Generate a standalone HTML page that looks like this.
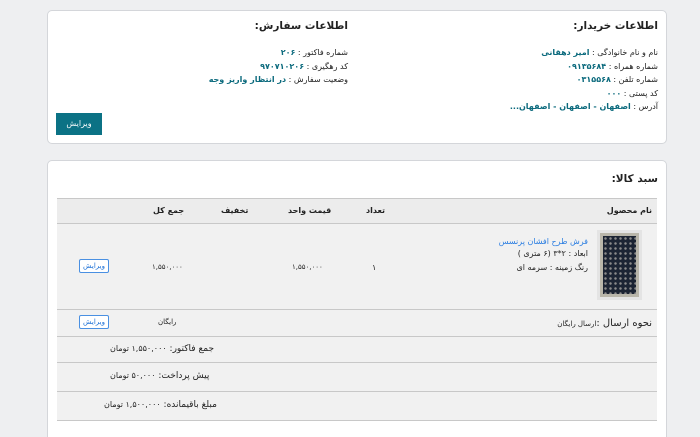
<!DOCTYPE html>
<html dir="rtl"><head><meta charset="utf-8"><style>
*{margin:0;padding:0;box-sizing:border-box}
html,body{width:700px;height:437px;overflow:hidden}
body{background:#eeeff1;font-family:"DejaVu Sans","Liberation Sans",sans-serif;font-size:8px;color:#222;position:relative}
.a{position:absolute;white-space:nowrap}
.card{position:absolute;background:#fff;border:1px solid #d4d6da;border-radius:5px}
.t{color:#0b6a7d;font-weight:bold}
h3{font-size:10.5px;font-weight:bold;position:absolute;white-space:nowrap}
.btn{position:absolute;background:#0b7285;color:#fff;font-size:8px;text-align:center}
.sb{position:absolute;border:1px solid #4a90e2;border-radius:2px;color:#1a6fd6;font-size:7px;text-align:center;background:#fff;width:30px;height:14px;line-height:12px}
.row{position:absolute;left:57px;width:600px;background:#f1f1f1;border-bottom:1px solid #c8c8c8}
</style></head><body>
<div class="card" style="left:47px;top:10px;width:620px;height:134px"></div>
<h3 style="right:42px;top:20px">اطلاعات خریدار:</h3>
<div class="a" style="right:42px;top:46px;line-height:13.5px;text-align:right">نام و نام خانوادگی : <span class="t">امیر دهقانی</span><br>شماره همراه : <span class="t">۰۹۱۳۵۶۸۴</span><br>شماره تلفن : <span class="t">۰۳۱۵۵۶۸</span><br>کد پستی : <span class="t">۰۰۰</span><br>آدرس : <span class="t">اصفهان - اصفهان - اصفهان...</span></div>
<h3 style="right:352px;top:20px">اطلاعات سفارش:</h3>
<div class="a" style="right:352px;top:46px;line-height:13.5px;text-align:right">شماره فاکتور : <span class="t">۲۰۶</span><br>کد رهگیری : <span class="t">۹۷۰۷۱۰۲۰۶</span><br>وضعیت سفارش : <span class="t">در انتظار واریز وجه</span></div>
<div class="btn" style="left:56px;top:113px;width:46px;height:22px;line-height:22px">ویرایش</div>

<div class="card" style="left:47px;top:160px;width:620px;height:290px"></div>
<h3 style="right:42px;top:173px">سبد کالا:</h3>
<div class="a" style="left:57px;top:198px;width:600px;height:223px;border:1px solid #c8c8c8;background:#f1f1f1"></div>
<div class="row" style="top:199px;height:25px;background:#ececec"></div>
<div class="a" style="right:48px;top:206px;font-weight:bold">نام محصول</div>
<div class="a" style="left:366px;top:206px;font-weight:bold">تعداد</div>
<div class="a" style="left:288px;top:206px;font-weight:bold">قیمت واحد</div>
<div class="a" style="left:221px;top:206px;font-weight:bold">تخفیف</div>
<div class="a" style="left:153px;top:206px;font-weight:bold">جمع کل</div>
<div class="row" style="top:224px;height:86px"></div>
<div class="a" style="left:597px;top:230px;width:45px;height:70px;background:#e4e4e4;padding:3px">
<div style="width:100%;height:100%;background:#1c2433;border:3px solid #b9b6aa;background-image:radial-gradient(#8a8a8a 1px,transparent 1.5px);background-size:5px 5px"></div></div>
<div class="a" style="right:112px;top:237px;color:#2a7de1">فرش طرح افشان پرنسس</div>
<div class="a" style="right:112px;top:249px">ابعاد : ۲*۳ (۶ متری )</div>
<div class="a" style="right:112px;top:263px">رنگ زمینه : سرمه ای</div>
<div class="a" style="left:372px;top:263px">۱</div>
<div class="a" style="left:292px;top:263px;font-size:7px">۱,۵۵۰,۰۰۰</div>
<div class="a" style="left:152px;top:263px;font-size:7px">۱,۵۵۰,۰۰۰</div>
<div class="sb" style="left:79px;top:259px">ویرایش</div>
<div class="row" style="top:310px;height:27px"></div>
<div class="a" style="right:48px;top:318px;font-size:10px">نحوه ارسال :<span style="font-size:7px">ارسال رایگان</span></div>
<div class="a" style="left:158px;top:318px;font-size:7px">رایگان</div>
<div class="sb" style="left:79px;top:315px">ویرایش</div>
<div class="row" style="top:337px;height:26px"></div>
<div class="a" style="left:110px;top:344px;font-size:9px">جمع فاکتور: <span style="font-size:8px">۱,۵۵۰,۰۰۰ تومان</span></div>
<div class="row" style="top:363px;height:29px"></div>
<div class="a" style="left:110px;top:371px;font-size:9px">پیش پرداخت: <span style="font-size:8px">۵۰,۰۰۰ تومان</span></div>
<div class="row" style="top:392px;height:28px;border-bottom:none"></div>
<div class="a" style="left:104px;top:400px;font-size:9px">مبلغ باقیمانده: <span style="font-size:8px">۱,۵۰۰,۰۰۰ تومان</span></div>
</body></html>
